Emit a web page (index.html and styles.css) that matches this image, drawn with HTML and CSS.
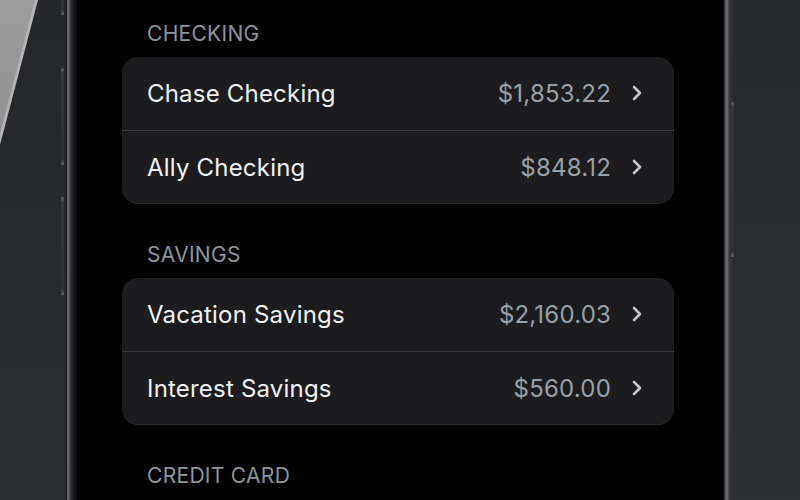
FILE: index.html
```html
<!DOCTYPE html>
<html>
<head>
<meta charset="utf-8">
<link rel="stylesheet" href="styles.css">
</head>
<body>
<div class="stage">
  <div class="side side-left">
    <div class="glare"><div class="glare-inner"></div></div>
    <span class="btn btn-l1"></span>
    <span class="btn btn-l2"></span>
    <span class="btn btn-l3"></span>
  </div>
  <div class="phone">
    <div class="bezel bezel-left"></div>
    <div class="screen">
      <section class="group">
        <h2 class="group-title">CHECKING</h2>
        <div class="card">
          <div class="row"><span class="name">Chase Checking</span><span class="amount">$1,853.22</span><svg class="chev" viewBox="0 0 10 16"><path d="M2 2 L8 8 L2 14"/></svg></div>
          <div class="row"><span class="name">Ally Checking</span><span class="amount">$848.12</span><svg class="chev" viewBox="0 0 10 16"><path d="M2 2 L8 8 L2 14"/></svg></div>
        </div>
      </section>
      <section class="group">
        <h2 class="group-title">SAVINGS</h2>
        <div class="card">
          <div class="row"><span class="name">Vacation Savings</span><span class="amount">$2,160.03</span><svg class="chev" viewBox="0 0 10 16"><path d="M2 2 L8 8 L2 14"/></svg></div>
          <div class="row"><span class="name">Interest Savings</span><span class="amount">$560.00</span><svg class="chev" viewBox="0 0 10 16"><path d="M2 2 L8 8 L2 14"/></svg></div>
        </div>
      </section>
      <section class="group">
        <h2 class="group-title">CREDIT CARD</h2>
      </section>
    </div>
    <div class="bezel bezel-right"></div>
  </div>
  <div class="side side-right">
    <span class="btn btn-r1"></span>
  </div>
</div>
</body>
</html>
```

FILE: styles.css
```css
html, body {
  margin: 0;
  padding: 0;
}
body {
  width: 800px;
  height: 500px;
  overflow: hidden;
  background: #27292c;
  font-family: Inter, "Noto Sans", "Liberation Sans", sans-serif;
}
.stage {
  display: flex;
  height: 500px;
}
.side {
  position: relative;
  flex: none;
  height: 500px;
}
.side-left {
  width: 66px;
  background: linear-gradient(to bottom, #25272a, #2a2c2f);
}
.side-right {
  flex: 1;
  background: linear-gradient(to bottom, #26282b, #2c2e31);
}
.glare {
  position: absolute;
  left: 0;
  top: 0;
  width: 40px;
  height: 150px;
  background: #b4b4b4;
  clip-path: polygon(0 0, 38px 0, 0 145px);
}
.glare-inner {
  width: 40px;
  height: 150px;
  background: linear-gradient(to bottom, #9d9d9d, #8f8f8f);
  clip-path: polygon(0 0, 35px 0, 0 134px);
}
.btn {
  position: absolute;
  width: 3px;
  border-radius: 2px;
  background: linear-gradient(to bottom, #6a6c70 0, #34363a 5px, #2e3034 calc(100% - 5px), #6a6c70 100%);
}
.btn-l1 { left: 61px; top: -8px; height: 23px; }
.btn-l2 { left: 61px; top: 68px; height: 97px; }
.btn-l3 { left: 61px; top: 197px; height: 98px; }
.btn-r1 { left: -2px; top: 102px; height: 155px; }
.phone {
  display: flex;
  flex: none;
  height: 500px;
}
.bezel {
  flex: none;
  height: 500px;
}
.bezel-left {
  width: 11px;
  background: linear-gradient(to right, #1f2023 0, #1f2023 1px, #606166 1px, #6b6c71 3px, #3a3b3f 4px, #1b1c1f 7px, #0a0a0b 11px);
}
.bezel-right {
  width: 10px;
  background: linear-gradient(to right, #0a0a0b 0, #202124 1px, #3a3b3f 2px, #6b6c71 3px, #606166 5px, #36373b 6px, #2d2e32 10px);
}
.screen {
  width: 646px;
  background: #000;
  padding: 20px 49px 0 45px;
  box-sizing: border-box;
  overflow: hidden;
}
.group {
  margin-bottom: 38px;
}
.group-title {
  margin: 0 0 10px 25px;
  font-size: 21px;
  line-height: 27px;
  font-weight: 400;
  color: #8e949b;
  letter-spacing: 0.3px;
}
.card {
  background: #1c1c1e;
  border-radius: 16px;
  box-shadow: 0 1px 0 #2a2a2c;
}
.row {
  display: flex;
  align-items: center;
  height: 73px;
  padding: 0 32px 1px 25px;
  box-sizing: border-box;
}
.row + .row {
  border-top: 1px solid #3a3a3c;
  padding-bottom: 0;
}
.name {
  flex: 1;
  font-size: 24px;
  color: #f2f2f4;
  letter-spacing: 0.2px;
}
.amount {
  font-size: 24px;
  color: #9aa0a7;
  letter-spacing: 0.2px;
}
.chev {
  width: 10px;
  height: 16px;
  margin-left: 21px;
  fill: none;
  stroke: #c4c5ca;
  stroke-width: 2.6;
  stroke-linecap: round;
  stroke-linejoin: round;
}
```
